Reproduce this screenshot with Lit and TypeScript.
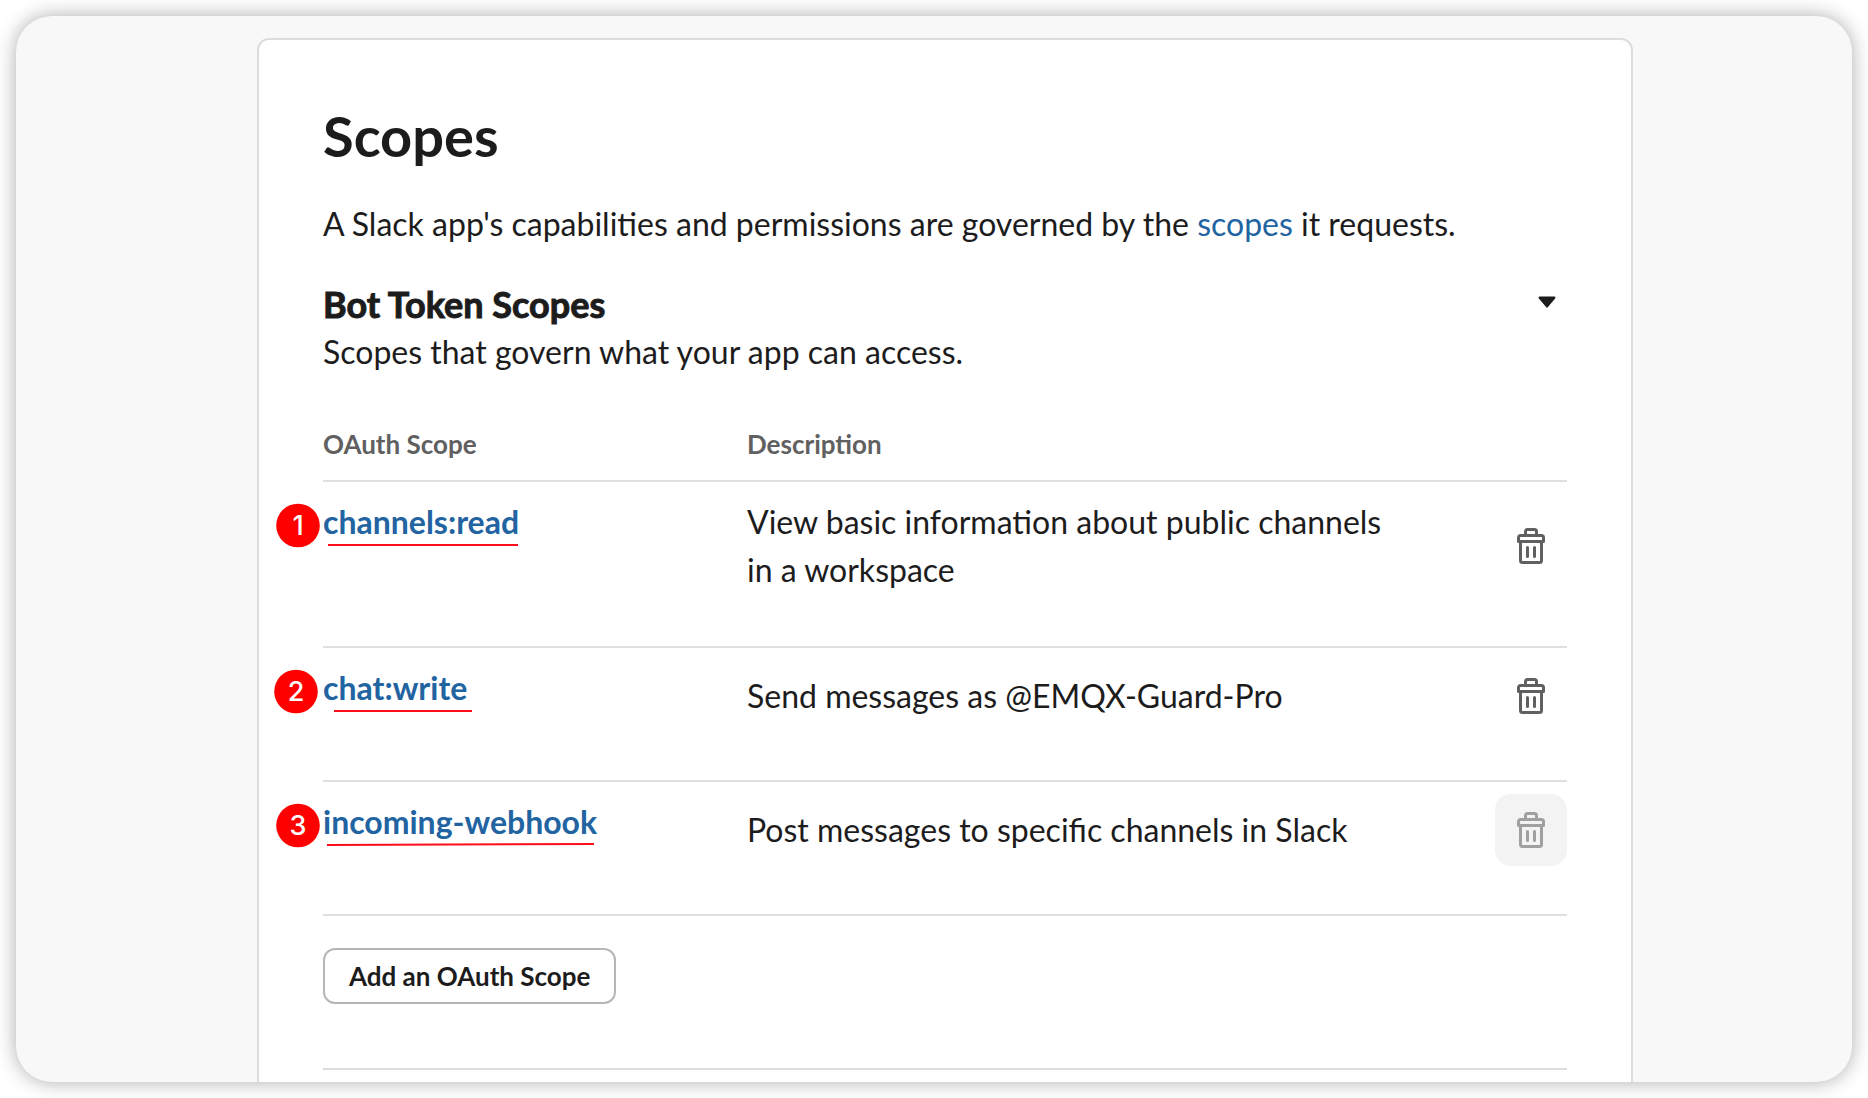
import { LitElement, html, css, svg } from "lit";
import { customElement, property, state } from "lit/decorators.js";
import { classMap } from "lit/directives/class-map.js";

interface Mark {
  badgeX: number;
  lineStart: number;
  lineEnd: number;
  rise: number;
}

interface Scope {
  name: string;
  description: string;
  locked: boolean;
  mark: Mark;
}

const SCOPES: Scope[] = [
  {
    name: "channels:read",
    description: "View basic information about public channels in a workspace",
    locked: false,
    mark: { badgeX: 26, lineStart: 56, lineEnd: 246, rise: 0 },
  },
  {
    name: "chat:write",
    description: "Send messages as @EMQX-Guard-Pro",
    locked: false,
    mark: { badgeX: 24, lineStart: 62, lineEnd: 200, rise: 0 },
  },
  {
    name: "incoming-webhook",
    description: "Post messages to specific channels in Slack",
    locked: true,
    mark: { badgeX: 26, lineStart: 55, lineEnd: 322, rise: 1 },
  },
];

/** Numbered red marker with a stroke under the scope name. */
@customElement("scope-mark")
export class ScopeMark extends LitElement {
  static styles = css`
    :host {
      display: block;
      pointer-events: none;
    }
    .drawing {
      display: block;
      overflow: visible;
    }
    .digit {
      font: 500 27px Inter, Roboto, sans-serif;
      fill: #fff;
      text-anchor: middle;
    }
  `;

  @property({ type: Number }) number = 1;
  @property({ attribute: false }) mark!: Mark;

  render() {
    const m = this.mark;
    return html`<svg class="drawing" width="340" height="80" viewBox="0 0 340 80">
      ${svg`
        <circle cx=${m.badgeX} cy="43.500" r="21.800" fill="#fe0000"></circle>
        <text class="digit" x=${m.badgeX} y="53">${this.number}</text>
        <line x1=${m.lineStart} y1="63" x2=${m.lineEnd} y2=${63 - m.rise}
          stroke="#fc0d1b" stroke-width="2"></line>`}
    </svg>`;
  }
}

@customElement("app-root")
export class AppRoot extends LitElement {
  static styles = css`
    :host {
      display: flex;
      box-sizing: border-box;
      min-height: 100vh;
      padding: 16px;
      background: #fff;
      color: #1d1c1d;
      font: 400 32px/48px Lato, "Liberation Sans", sans-serif;
    }
    .window {
      display: flex;
      flex: 1;
      box-sizing: border-box;
      min-width: 0;
      padding: 22px 219px 0 241px;
      overflow: hidden;
      background: #f8f8f8;
      border-radius: 36px;
      box-shadow: 0 0 20px rgba(0, 0, 0, 0.33);
    }
    .card {
      flex: 1;
      min-width: 0;
      padding: 64px 64px 0;
      background: #fff;
      border: 2px solid #ddd;
      border-bottom: 0;
      border-radius: 12px 12px 0 0;
    }
    h1,
    h2,
    p {
      margin: 0;
    }
    .title {
      margin-bottom: 32px;
      font-size: 56px;
      line-height: 64px;
      font-weight: 700;
    }
    a {
      color: #2264a2;
      text-decoration: none;
    }
    .section {
      display: flex;
      justify-content: space-between;
      align-items: flex-start;
      margin-top: 32px;
    }
    .subtitle {
      font-size: 36px;
      line-height: 48px;
      font-weight: 700;
      -webkit-text-stroke: 1px currentColor;
    }
    button {
      font-family: inherit;
      color: inherit;
      cursor: pointer;
    }
    .toggle {
      display: grid;
      place-items: center;
      width: 40px;
      height: 44px;
      padding: 0;
      border: 0;
      background: none;
    }
    .toggle.closed .caret {
      transform: rotate(-90deg);
    }
    .scopes {
      width: 100%;
      margin-top: 32px;
      border-collapse: separate;
      border-spacing: 0;
      table-layout: fixed;
    }
    .col-name {
      width: 424px;
    }
    .col-action {
      width: 180px;
    }
    th,
    td {
      padding: 12px 0 48px;
      border-bottom: 2px solid #e0e0e0;
      text-align: left;
      vertical-align: top;
    }
    th {
      padding: 16px 0;
      color: #616061;
      font-size: 26px;
      line-height: 40px;
      font-weight: 700;
    }
    .name {
      position: relative;
      padding-top: 16px;
    }
    .name a {
      font-weight: 700;
    }
    .mark {
      position: absolute;
      top: 0;
      left: -51px;
    }
    .description,
    .action {
      vertical-align: middle;
    }
    .description p {
      padding: 4px 0;
    }
    .remove {
      display: grid;
      place-items: center;
      width: 72px;
      height: 72px;
      margin-left: auto;
      padding: 0;
      border: 0;
      border-radius: 16px;
      background: none;
      color: #616061;
    }
    .remove:disabled {
      background: #f3f3f3;
      color: #a0a0a0;
      cursor: default;
    }
    .add {
      display: block;
      box-sizing: border-box;
      margin-top: 32px;
      padding: 6px 24px;
      border: 2px solid #b6b6b6;
      border-radius: 12px;
      background: #fff;
      font-size: 26px;
      line-height: 40px;
      font-weight: 700;
    }
    .divider {
      margin: 64px 0 0;
      border: 0;
      border-top: 2px solid #ddd;
    }
  `;

  @state() private open = true;

  private renderTrash() {
    return html`<svg width="28" height="36" viewBox="0 0 28 36" fill="none"
      stroke="currentColor" stroke-width="3" stroke-linejoin="round" stroke-linecap="round" aria-hidden="true">
      <path d="M8.5 7V3.5a2 2 0 0 1 2-2h7a2 2 0 0 1 2 2V7"></path>
      <path d="M1.500 13.500V9.500a2 2 0 0 1 2-2h21a2 2 0 0 1 2 2v4z"></path>
      <path d="M3.500 14v18.500a2 2 0 0 0 2 2h17a2 2 0 0 0 2-2V14"></path>
      <path d="M10.500 19.500v9M17.500 19.500v9"></path>
    </svg>`;
  }

  private renderTable() {
    return html`<table class="scopes">
      <colgroup>
        <col class="col-name" />
        <col />
        <col class="col-action" />
      </colgroup>
      <thead>
        <tr>
          <th scope="col">OAuth Scope</th>
          <th scope="col">Description</th>
          <th></th>
        </tr>
      </thead>
      <tbody>
        ${SCOPES.map(
          (scope, i) => html`<tr>
            <td class="name">
              <a href="#${scope.name}">${scope.name}</a>
              <scope-mark class="mark" .number=${i + 1} .mark=${scope.mark}></scope-mark>
            </td>
            <td class="description"><p>${scope.description}</p></td>
            <td class="action">
              <button class="remove" type="button" aria-label="Remove ${scope.name}" ?disabled=${scope.locked}>
                ${this.renderTrash()}
              </button>
            </td>
          </tr>`
        )}
      </tbody>
    </table>`;
  }

  render() {
    return html`<main class="window">
      <article class="card">
        <h1 class="title">Scopes</h1>
        <p>A Slack app's capabilities and permissions are governed by the <a href="#scopes">scopes</a> it requests.</p>
        <header class="section">
          <div>
            <h2 class="subtitle">Bot Token Scopes</h2>
            <p>Scopes that govern what your app can access.</p>
          </div>
          <button
            class=${classMap({ toggle: true, closed: !this.open })}
            type="button"
            aria-label="Bot Token Scopes"
            aria-expanded=${this.open}
            @click=${() => (this.open = !this.open)}
          >
            <svg class="caret" width="18" height="12" viewBox="0 0 18 12" aria-hidden="true">
              <path d="M1.800 1.800h14.400L9 10.200z" fill="currentColor" stroke="currentColor" stroke-width="2.500" stroke-linejoin="round"></path>
            </svg>
          </button>
        </header>
        ${this.open ? this.renderTable() : ""}
        <button class="add" type="button">Add an OAuth Scope</button>
        <hr class="divider" />
      </article>
    </main>`;
  }
}
